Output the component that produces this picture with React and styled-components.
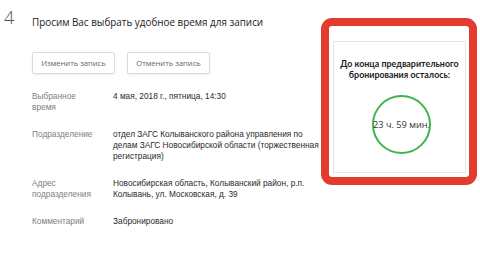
import React from 'react'
import styled, { createGlobalStyle } from 'styled-components'

const GlobalStyle = createGlobalStyle`
  html, body {
    margin: 0;
    padding: 0;
    background: #ffffff;
  }
  body {
    width: 480px;
    height: 256px;
    overflow: hidden;
  }
`;

const details = [
  { label: 'Выбранное время', value: '4 мая, 2018 г., пятница, 14:30' },
  {
    label: 'Подразделение',
    value: 'отдел ЗАГС Колыванского района управления по делам ЗАГС Новосибирской области (торжественная регистрация)'
  },
  { label: 'Адрес подразделения', value: 'Новосибирская область, Колыванский район, р.п. Колывань, ул. Московская, д. 39' },
  { label: 'Комментарий', value: 'Забронировано' }
];

const App = () => {
  return (
    <>
      <GlobalStyle />
      <Page>
        <Step>4</Step>
        <Content>
          <Title>Просим Вас выбрать удобное время для записи</Title>
          <Buttons>
            <Button>Изменить запись</Button>
            <Button>Отменить запись</Button>
          </Buttons>
          <Details>
            {details.map((row) => (
              <React.Fragment key={row.label}>
                <Label>{row.label}</Label>
                <Value>{row.value}</Value>
              </React.Fragment>
            ))}
          </Details>
        </Content>
        <Highlight>
          <TimerCard>
            <TimerTitle>До конца предварительного бронирования осталось:</TimerTitle>
            <Circle>23 ч. 59 мин.</Circle>
          </TimerCard>
        </Highlight>
      </Page>
    </>
  )
}

const Page = styled.div`
  display: flex;
  align-items: flex-start;
  width: 480px;
  height: 256px;
  box-sizing: border-box;
`;

const Step = styled.div`
  width: 32px;
  box-sizing: border-box;
  padding: 6px 0 0 4px;
  font-family: "Open Sans", sans-serif;
  font-weight: 300;
  font-size: 18px;
  line-height: 22px;
  color: #555;
`;

const Content = styled.div`
  width: 289px;
  padding-top: 15px;
  display: flex;
  flex-direction: column;
`;

const Title = styled.div`
  font-family: "Open Sans", sans-serif;
  font-size: 9.9px;
  line-height: 14px;
  color: #222;
  white-space: nowrap;
`;

const Buttons = styled.div`
  display: flex;
  gap: 12px;
  margin-top: 23px;
`;

const Button = styled.button`
  width: 83px;
  height: 22px;
  padding: 0;
  background: #fff;
  border: 1px solid #dcdcdc;
  border-radius: 2px;
  box-shadow: 0 1px 2px rgba(0, 0, 0, 0.08);
  font-family: "Open Sans", sans-serif;
  font-size: 7.6px;
  color: #666;
`;

const Details = styled.div`
  display: grid;
  grid-template-columns: 81px 208px;
  row-gap: 16px;
  margin-top: 17px;
  font-family: "Liberation Sans", Arial, sans-serif;
  font-size: 8.3px;
  line-height: 11px;
`;

const Label = styled.div`
  color: #808080;
  padding-right: 16px;
`;

const Value = styled.div`
  color: #2a2a2a;
`;

const Highlight = styled.div`
  width: 156px;
  height: 167px;
  margin-top: 18px;
  box-sizing: border-box;
  border: 8px solid #e43b30;
  border-radius: 11px;
  padding: 15px 3px 4px 4px;
`;

const TimerCard = styled.div`
  height: 100%;
  box-sizing: border-box;
  border: 1px solid #e6e6e6;
  display: flex;
  flex-direction: column;
  align-items: center;
  padding-top: 16px;
`;

const TimerTitle = styled.div`
  width: 128px;
  text-align: center;
  font-family: Lato, "Open Sans", sans-serif;
  font-weight: 700;
  font-size: 8.9px;
  line-height: 11px;
  color: #222;
`;

const Circle = styled.div`
  margin-top: 15px;
  margin-left: 4px;
  width: 59px;
  height: 59px;
  box-sizing: border-box;
  border: 2px solid #3db54a;
  border-radius: 50%;
  display: flex;
  align-items: center;
  justify-content: center;
  white-space: nowrap;
  font-family: "Open Sans", sans-serif;
  font-size: 9.2px;
  color: #333;
`;

export default App
